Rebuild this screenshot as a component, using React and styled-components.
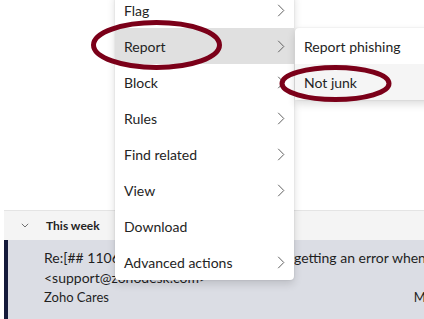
import React from 'react';
import styled, { createGlobalStyle } from 'styled-components';

const Global = createGlobalStyle`
  html, body { margin: 0; padding: 0; background: #fff; overflow: hidden; }
  body { font-family: Lato, "Noto Sans", sans-serif; }
`;

const Page = styled.div`
  position: relative;
  width: 424px;
  height: 319px;
  overflow: hidden;
  background: #fff;
  display: flex;
  flex-direction: column;
`;

const Spacer = styled.div`
  height: 210px;
  flex: none;
`;

const List = styled.div`
  width: 470px;
  padding-left: 4px;
  display: flex;
  flex-direction: column;
`;

const GroupHeader = styled.div`
  height: 29px;
  border-top: 1px solid #e4e4e4;
  background: #f4f4f4;
  display: flex;
  align-items: center;
  padding-left: 17px;
  gap: 17px;
  font-size: 12px;
  font-weight: 700;
  color: #242424;
`;

const MailRow = styled.div`
  height: 76px;
  background: #dbdde4;
  border-left: 4px solid #141a3a;
  padding: 8px 2px 0 36px;
  display: flex;
  flex-direction: column;
  color: #1f1f1f;
`;

const Subject = styled.div`
  font-size: 14px;
  line-height: 20px;
  white-space: nowrap;
`;

const Meta = styled.div`
  font-size: 13px;
  line-height: 18px;
  display: flex;
  justify-content: space-between;
  white-space: nowrap;
`;

const Menu = styled.div`
  position: absolute;
  left: ${p => p.$left}px;
  top: ${p => p.$top}px;
  width: ${p => p.$width}px;
  background: #fff;
  border-radius: 4px;
  box-shadow: 0 0 2px rgba(0, 0, 0, 0.12), 0 4px 8px rgba(0, 0, 0, 0.14);
  display: flex;
  flex-direction: column;
`;

const Item = styled.div`
  height: 36px;
  display: flex;
  align-items: center;
  justify-content: space-between;
  padding: 0 9px;
  font-size: 14px;
  color: #242424;
  background: ${p => p.$bg || 'transparent'};
  white-space: nowrap;
`;

const Overlay = styled.svg`
  position: absolute;
  left: 0;
  top: 0;
  pointer-events: none;
`;

const Chevron = () => (
  <svg width="8" height="13" viewBox="0 0 8 13" fill="none">
    <path d="M1.2 0.8 L6.8 6.5 L1.2 12.2" stroke="#616161" strokeWidth="1" />
  </svg>
);

const Down = () => (
  <svg width="8" height="5" viewBox="0 0 8 5" fill="none">
    <path d="M0.8 0.8 L4 4 L7.2 0.8" stroke="#707070" strokeWidth="1" />
  </svg>
);

const items = [
  { label: 'Flag', sub: true },
  { label: 'Report', sub: true, bg: '#e0e0e0' },
  { label: 'Block', sub: true },
  { label: 'Rules', sub: true },
  { label: 'Find related', sub: true },
  { label: 'View', sub: true },
  { label: 'Download', sub: false },
  { label: 'Advanced actions', sub: true },
];

export default function App() {
  return (
    <>
      <Global />
      <Page>
        <Spacer />
        <List>
          <GroupHeader>
            <Down />
            <span>This week</span>
          </GroupHeader>
          <MailRow>
            <Subject>Re:[## 11063 ##] Hi team, why am I still getting an error when I sign in</Subject>
            <Subject>&lt;support@zohodesk.com&gt;</Subject>
            <Meta>
              <span>Zoho Cares</span>
              <span>Mon 5/13</span>
            </Meta>
          </MailRow>
        </List>

        <Menu $left={115} $top={-8} $width={179}>
          {items.map(it => (
            <Item key={it.label} $bg={it.bg}>
              <span>{it.label}</span>
              {it.sub && <Chevron />}
            </Item>
          ))}
        </Menu>

        <Menu $left={295} $top={28} $width={150}>
          <Item>Report phishing</Item>
          <Item $bg="#f5f5f5">Not junk</Item>
        </Menu>

        <Overlay width="424" height="319" viewBox="0 0 424 319">
          <ellipse cx="156.5" cy="45" rx="63" ry="22.5" fill="none" stroke="#7b0019" strokeWidth="5" />
          <ellipse cx="335.5" cy="83.5" rx="53.5" ry="16" fill="none" stroke="#7b0019" strokeWidth="5" />
        </Overlay>
      </Page>
    </>
  );
}
